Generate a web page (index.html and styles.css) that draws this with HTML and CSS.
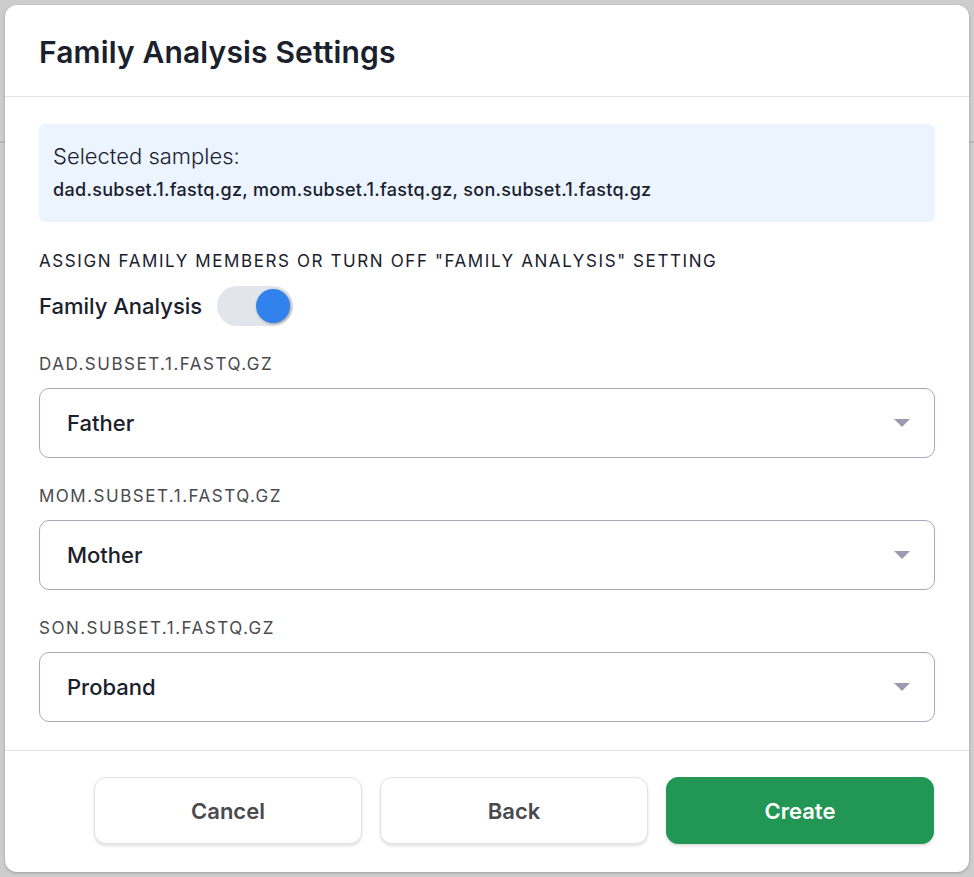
FILE: index.html
```html
<!DOCTYPE html>
<html>
<head>
<meta charset="utf-8">
<link rel="stylesheet" href="styles.css">
</head>
<body>
<div class="modal">
  <div class="modal-header">
    <h1 class="title">Family Analysis Settings</h1>
  </div>
  <div class="modal-body">
    <div class="info">
      <div class="info-label">Selected samples:</div>
      <div class="info-files">dad.subset.1.fastq.gz, mom.subset.1.fastq.gz, son.subset.1.fastq.gz</div>
    </div>
    <div class="section-label assign">ASSIGN FAMILY MEMBERS OR TURN OFF "FAMILY ANALYSIS" SETTING</div>
    <div class="toggle-row">
      <span class="toggle-label">Family Analysis</span>
      <span class="toggle"><span class="knob"></span></span>
    </div>
    <div class="field">
      <div class="field-label">DAD.SUBSET.1.FASTQ.GZ</div>
      <div class="select"><span>Father</span><span class="caret"></span></div>
    </div>
    <div class="field">
      <div class="field-label">MOM.SUBSET.1.FASTQ.GZ</div>
      <div class="select"><span>Mother</span><span class="caret"></span></div>
    </div>
    <div class="field">
      <div class="field-label">SON.SUBSET.1.FASTQ.GZ</div>
      <div class="select"><span>Proband</span><span class="caret"></span></div>
    </div>
  </div>
  <div class="modal-footer">
    <button class="btn">Cancel</button>
    <button class="btn">Back</button>
    <button class="btn primary">Create</button>
  </div>
</div>
</body>
</html>
```
FILE: styles.css
```css
* { box-sizing: border-box; }
html, body { margin: 0; padding: 0; }
body {
  width: 974px;
  height: 877px;
  overflow: hidden;
  font-family: Inter, "Noto Sans", sans-serif;
  color: #1a202c;
  background: linear-gradient(to bottom, #cdcdcd 0, #cdcdcd 141px, #b8b8b8 141px, #b8b8b8 143px, #cdcdcd 143px);
  padding: 5px;
}
.modal {
  width: 964px;
  height: 867px;
  background: #fff;
  border-radius: 12px;
  box-shadow: 0 1px 3px rgba(0,0,0,0.25);
  display: flex;
  flex-direction: column;
}
.modal-header {
  height: 92px;
  padding: 2px 34px 0 34px;
  display: flex;
  align-items: center;
  border-bottom: 1px solid #e2e2ea;
}
.title {
  margin: 0;
  font-size: 30px;
  line-height: 36px;
  font-weight: 600;
  letter-spacing: 0.15px;
  color: #1a202c;
}
.modal-body {
  padding: 27px 34px 28px 34px;
  border-bottom: 1px solid #e2e2ea;
}
.info {
  background: #ebf4ff;
  border-radius: 6px;
  padding: 20px 14px 21px 14px;
}
.info-label {
  font-size: 22px;
  font-weight: 300;
  line-height: 24px;
  color: #1a202c;
}
.info-files {
  margin-top: 11px;
  font-size: 18px;
  font-weight: 500;
  line-height: 22px;
  letter-spacing: 0.3px;
  color: #1a202c;
}
.section-label {
  font-size: 17px;
  line-height: 20px;
  letter-spacing: 1.6px;
  color: #1a202c;
}
.assign { margin-top: 29px; }
.toggle-row {
  margin-top: 15px;
  display: flex;
  align-items: center;
  gap: 15px;
}
.toggle-label {
  font-size: 22px;
  line-height: 26px;
  font-weight: 500;
  color: #1a202c;
}
.toggle {
  width: 76px;
  height: 40px;
  border-radius: 20px;
  background: #e2e5ec;
  display: flex;
  align-items: center;
  justify-content: flex-end;
  padding: 0 3px;
}
.knob {
  width: 34px;
  height: 34px;
  border-radius: 50%;
  background: #3182ed;
  box-shadow: 1px 1px 3px rgba(0,0,0,0.35);
}
.field { margin-top: 28px; }
.field-label {
  font-size: 17px;
  line-height: 20px;
  letter-spacing: 1.5px;
  color: #4a4a4e;
}
.select {
  margin-top: 14px;
  height: 70px;
  border: 1px solid #a8a8bc;
  border-radius: 10px;
  display: flex;
  align-items: center;
  justify-content: space-between;
  padding: 0 24px 0 27px;
  font-size: 22px;
  line-height: 26px;
  font-weight: 500;
  color: #1a202c;
}
.caret {
  width: 0;
  height: 0;
  border-left: 8px solid transparent;
  border-right: 8px solid transparent;
  border-top: 8px solid #9b9bb0;
}
.modal-footer {
  flex: 1;
  display: flex;
  justify-content: flex-end;
  align-items: flex-start;
  gap: 18px;
  padding: 26px 35px 0 0;
}
.btn {
  width: 268px;
  height: 67px;
  border-radius: 12px;
  border: 1px solid #e2e2ea;
  background: #fff;
  box-shadow: 0 2px 3px rgba(0,0,0,0.12);
  font-family: Inter, "Noto Sans", sans-serif;
  font-size: 22px;
  font-weight: 600;
  color: #4a4a4e;
  padding: 0;
}
.btn.primary {
  background: #229654;
  border-color: #229654;
  color: #fff;
}
```
